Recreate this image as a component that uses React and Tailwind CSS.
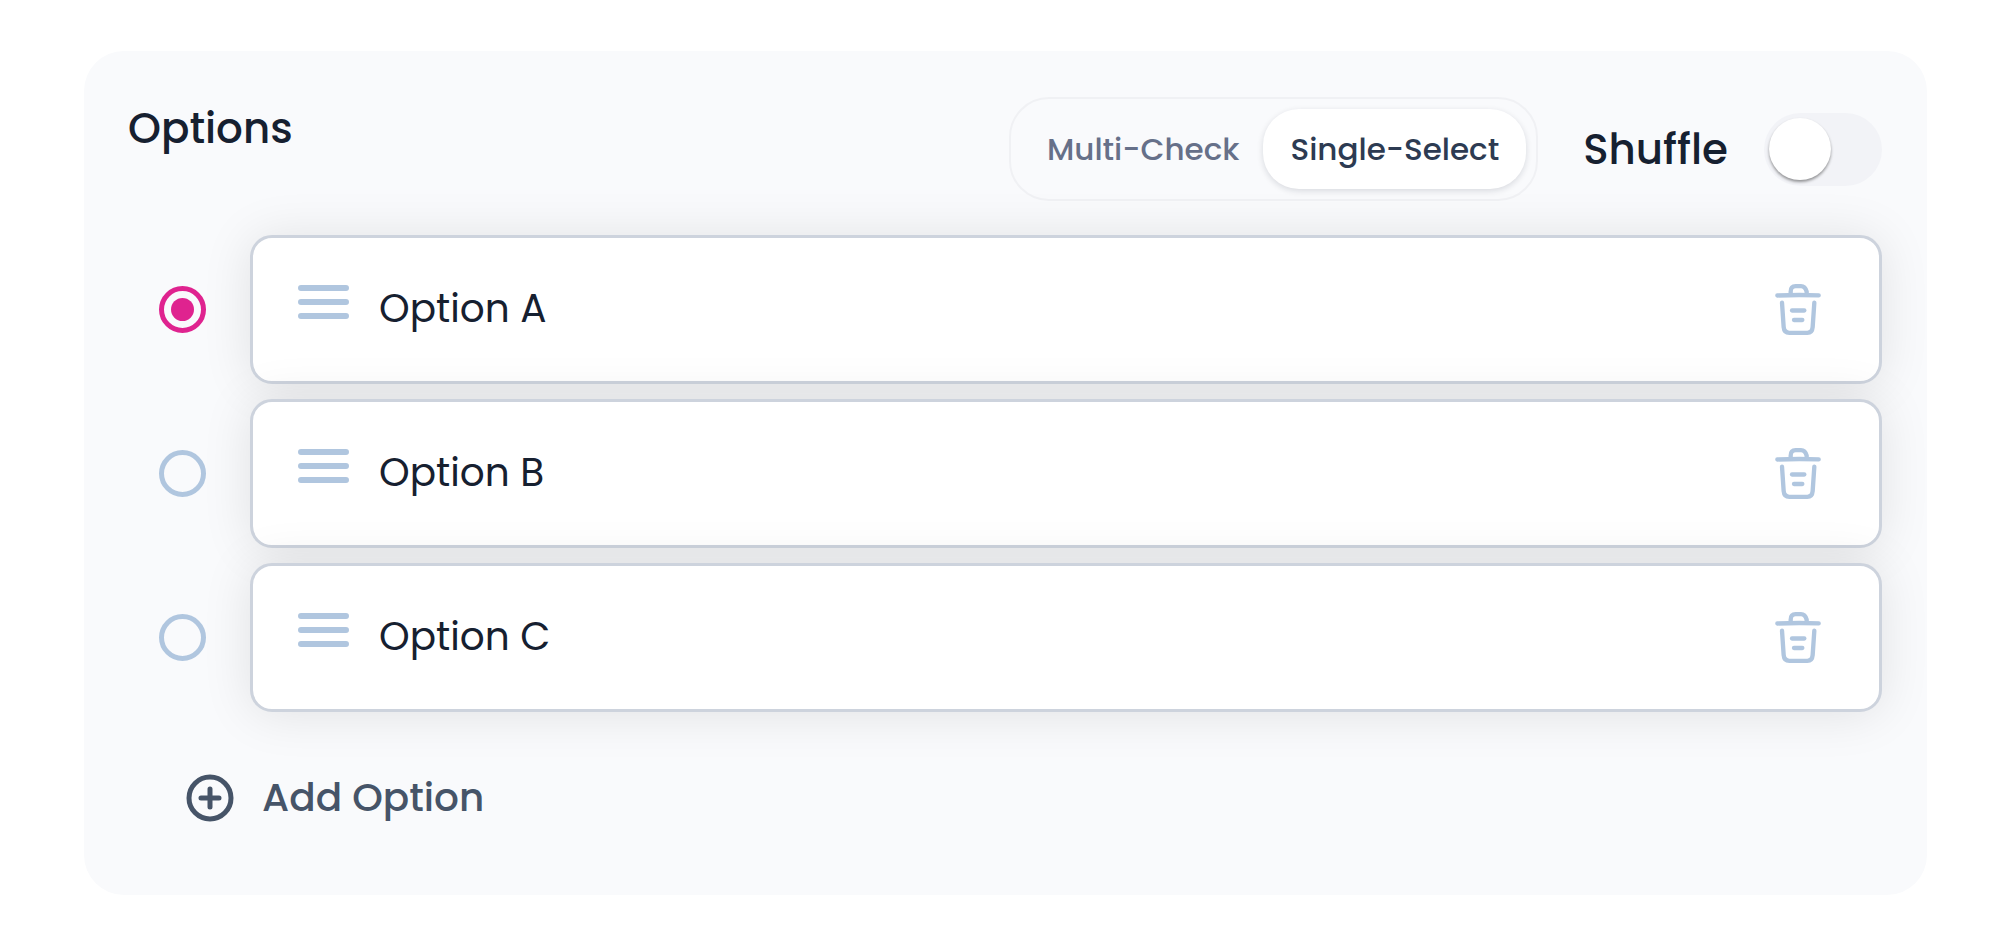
import { useState } from 'react';

const initialOptions = [
  { id: 'a', label: 'Option A' },
  { id: 'b', label: 'Option B' },
  { id: 'c', label: 'Option C' },
];

function TrashIcon() {
  return (
    <svg
      viewBox="0 0 138 153"
      className="h-[51px] w-[46px]"
      fill="none"
      stroke="currentColor"
      strokeWidth="13"
      strokeLinecap="round"
      strokeLinejoin="round"
      aria-hidden="true"
    >
      <path d="M7 34.5C40 33 98 33 131 34" />
      <path d="M47 31V23C47 12 53 6.500 62 6.500H78C87 6.500 92 12 95 23V31" />
      <path d="M21 56L26 129C27 141 33 146.500 43 146.500H97C107 146.500 112 141 113 129L118 56" />
      <path d="M51 79.500H88" />
      <path d="M57 108H82" />
    </svg>
  );
}

function DragIcon() {
  return (
    <svg
      viewBox="0 0 51 34"
      className="h-[34px] w-[51px]"
      fill="none"
      stroke="currentColor"
      strokeWidth="6"
      strokeLinecap="round"
      aria-hidden="true"
    >
      <path d="M3 3H48M3 17H48M3 31H48" />
    </svg>
  );
}

function AddIcon() {
  return (
    <svg
      viewBox="0 0 48 48"
      className="size-12"
      fill="none"
      stroke="currentColor"
      strokeWidth="5"
      strokeLinecap="round"
      aria-hidden="true"
    >
      <circle cx="24" cy="24" r="21" />
      <path d="M15 24H33M24 15V33" />
    </svg>
  );
}

function OptionRow({ option, checked, onSelect }) {
  return (
    <li className="flex items-center gap-11 pl-[31px]">
      <input
        type="radio"
        name="correct-option"
        aria-label={`Select ${option.label}`}
        checked={checked}
        onChange={onSelect}
        className="grid size-[47px] shrink-0 appearance-none place-content-center rounded-full border-5 border-[#b0c6df] before:size-[23px] before:rounded-full checked:border-[#df238f] checked:before:bg-[#df238f]"
      />
      <div className="flex h-[149px] min-w-0 flex-1 items-center rounded-[22px] border-3 border-[#cdd3dd] bg-white pr-[58px] pl-[45px] shadow-[0_2px_50px_rgba(0,0,0,0.1)]">
        <button type="button" aria-label={`Reorder ${option.label}`} className="mb-4 text-[#b0c6df]">
          <DragIcon />
        </button>
        <input
          type="text"
          aria-label="Option text"
          defaultValue={option.label}
          className="mb-[2px] ml-[30px] min-w-0 flex-1 bg-transparent text-[39px] leading-[60px] text-[#162030] outline-none"
        />
        <button type="button" aria-label={`Delete ${option.label}`} className="text-[#b0c6df]">
          <TrashIcon />
        </button>
      </div>
    </li>
  );
}

export default function App() {
  const [selected, setSelected] = useState('a');
  const [mode, setMode] = useState('single');
  const [shuffle, setShuffle] = useState(false);

  const modeClass = (active) =>
    active
      ? 'rounded-[36px] bg-white px-[27px] text-[#2d3b52] shadow-[0_2px_6px_rgba(16,24,40,0.14)]'
      : 'rounded-[36px] px-6 text-[#667089]';

  return (
    <main className="bg-white pt-[51px] pr-[73px] pb-[47px] pl-[84px] font-['Poppins','Inter',sans-serif]">
      <section className="rounded-[40px] bg-[#f9fafc] pt-[46px] pr-[45px] pb-[72px] pl-11">
        <header className="flex items-start justify-between">
          <h2 className="pt-2 text-[42px] leading-[48px] font-medium text-[#162030]">Options</h2>
          <div className="flex items-center">
            <div className="flex h-[104px] items-center rounded-[40px] border-2 border-[#f0f1f4] pr-[10px] pl-3">
              <button type="button" aria-pressed={mode === 'multi'} onClick={() => setMode('multi')} className={`h-20 text-[31px] font-medium ${modeClass(mode === 'multi')}`}>
                Multi-Check
              </button>
              <button type="button" aria-pressed={mode === 'single'} onClick={() => setMode('single')} className={`h-20 text-[31px] font-medium ${modeClass(mode === 'single')}`}>
                Single-Select
              </button>
            </div>
            <label htmlFor="shuffle" className="ml-[45px] pt-[2px] text-[42px] leading-[48px] font-medium text-[#162030]">
              Shuffle
            </label>
            <input
              id="shuffle"
              type="checkbox"
              role="switch"
              checked={shuffle}
              onChange={(e) => setShuffle(e.target.checked)}
              className="ml-9 flex h-[73px] w-[118px] appearance-none items-center rounded-full bg-[#f2f3f7] px-[5px] before:size-[62px] before:rounded-full before:bg-white before:shadow-[0_2px_3px_rgba(0,0,0,0.4)] checked:justify-end checked:bg-[#df238f]"
            />
          </div>
        </header>

        <ul className="mt-[34px] flex flex-col gap-[15px]">
          {initialOptions.map((option) => (
            <OptionRow
              key={option.id}
              option={option}
              checked={selected === option.id}
              onSelect={() => setSelected(option.id)}
            />
          ))}
        </ul>

        <button type="button" className="mt-[61px] ml-[58px] flex items-center gap-7 text-[39px] leading-[50px] font-medium text-[#465468]">
          <AddIcon />
          Add Option
        </button>
      </section>
    </main>
  );
}
